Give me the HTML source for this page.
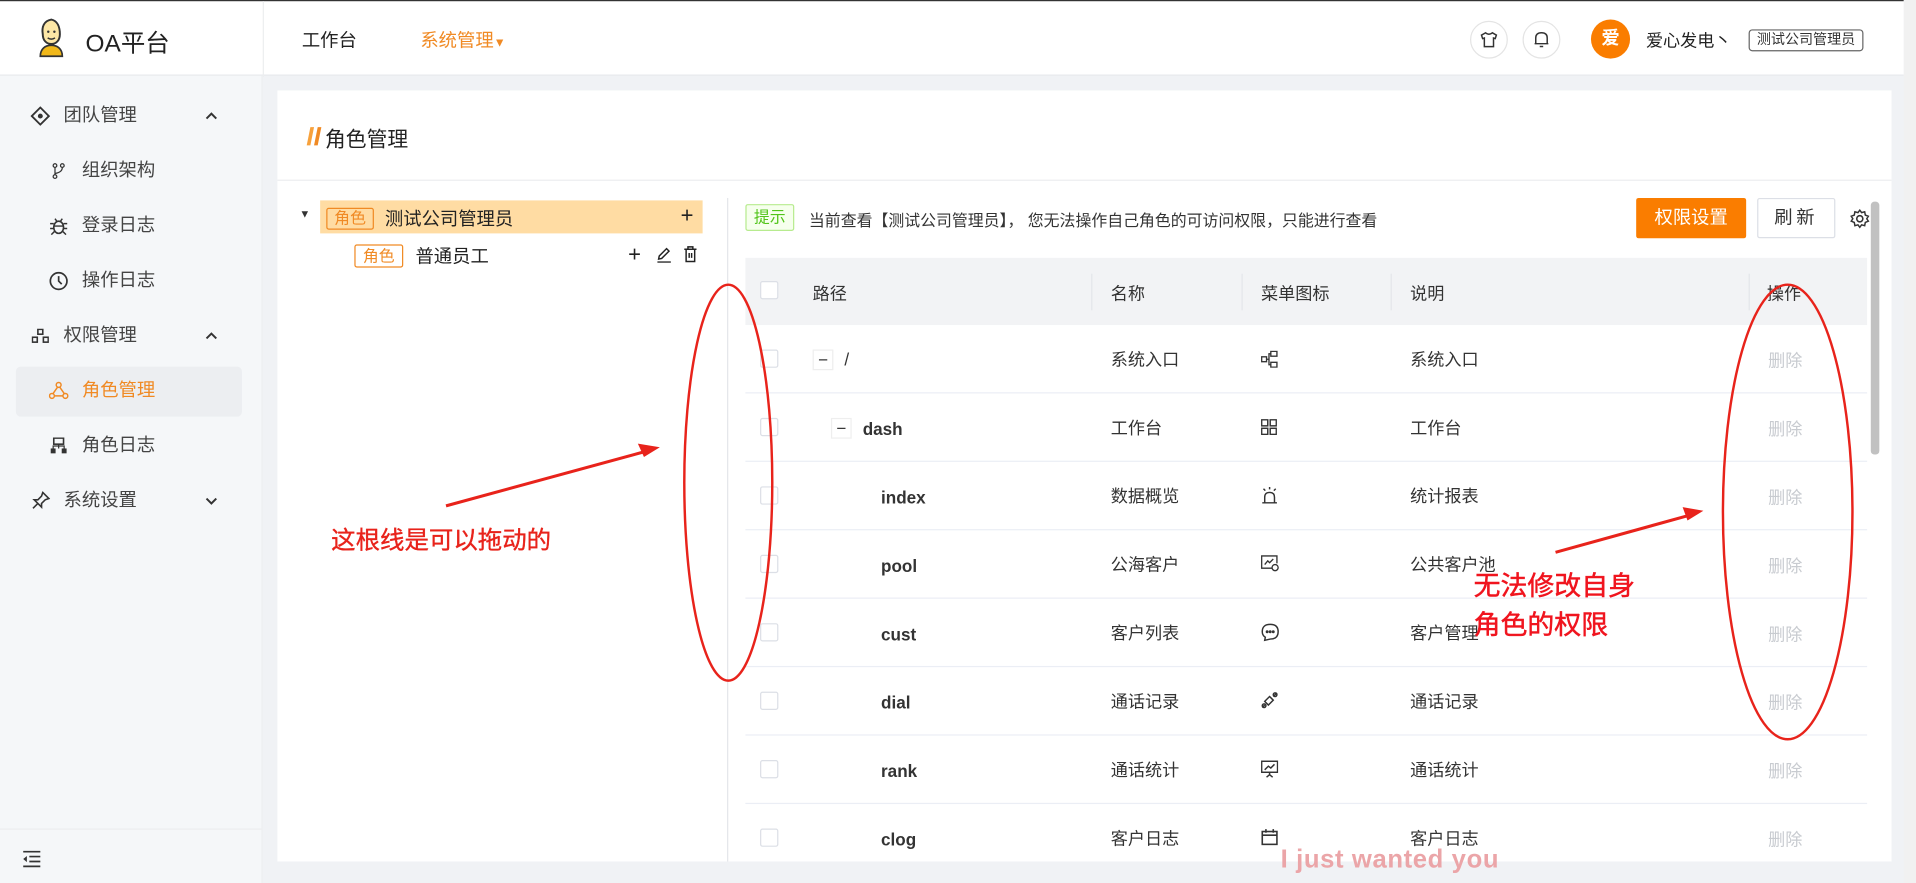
<!DOCTYPE html>
<html><head><meta charset="utf-8"><style>
*{box-sizing:border-box;margin:0;padding:0}
html,body{width:1916px;height:883px;overflow:hidden;background:#f0f2f5}
#w{position:absolute;left:0;top:0;width:1568px;height:723px;transform:scale(1.22194);transform-origin:0 0;font-family:"Liberation Sans","Noto Sans CJK SC",sans-serif;color:#333;background:#f0f2f5}
.a{position:absolute}
.hdr{left:0;top:0;width:1558px;height:62px;background:#fff;border-top:1px solid #333;border-bottom:1px solid #e6e8eb}
.side{left:0;top:62px;width:215px;height:661px;background:#f5f7f9;border-right:1px solid #eceef0}
.mi{position:absolute;font-size:15px;color:#444;line-height:20px}
.t{font-size:14px;color:#333;white-space:nowrap}
.lat{position:relative;top:1px}
.cb{position:absolute;left:622px;width:15px;height:15px;border:1px solid #dcdfe6;border-radius:2px;background:#fff}
.row{position:absolute;left:610px;width:918px;height:56px;border-bottom:1px solid #ebeef5}
.del{position:absolute;left:1447px;font-size:14px;color:#c8cbd0}
</style></head><body><div id="w">
<div class="a hdr">
 <svg class="a" style="left:30px;top:13px" width="24" height="34" viewBox="0 0 24 34"><path d="M12 2 C6 3 4 8 5 14 C5 19 8 22 12 22 C16 22 19 19 19 14 C19 8 17 3 12 2Z" fill="#fde7a6" stroke="#333" stroke-width="1.6"/><circle cx="9.5" cy="12" r="1" fill="#333"/><circle cx="14.5" cy="12" r="1" fill="#333"/><path d="M9 17 Q12 19 15 17" stroke="#333" fill="none" stroke-width="1.2"/><path d="M3 32 C3 26 7 23 12 23 C17 23 21 26 21 32Z" fill="#f1b81a" stroke="#333" stroke-width="1.4"/></svg>
 <div class="a" style="left:70px;top:18px;font-size:20px;color:#222">OA平台</div>
 <div class="a" style="left:215px;top:0;width:1px;height:62px;background:#eceef0"></div>
 <div class="a" style="left:247px;top:21px;font-size:15px;color:#222">工作台</div>
 <div class="a" style="left:344px;top:21px;font-size:15px;color:#f08a24">系统管理<span style="font-size:10px">▼</span></div>
 <div class="a" style="left:1203px;top:16px;width:31px;height:31px;border:1px solid #e4e4e4;border-radius:50%"></div>
 <svg class="a" style="left:1211px;top:24px" width="15" height="15" viewBox="0 0 16 16"><path d="M5 2 L1.5 4 L2.5 7 L4 6.5 V14 H12 V6.5 L13.5 7 L14.5 4 L11 2 Q8 4.5 5 2Z" fill="none" stroke="#333" stroke-width="1.3"/></svg>
 <div class="a" style="left:1246px;top:16px;width:31px;height:31px;border:1px solid #e4e4e4;border-radius:50%"></div>
 <svg class="a" style="left:1254px;top:23px" width="15" height="16" viewBox="0 0 16 16"><path d="M3 12 V7 Q3 2.5 8 2.5 Q13 2.5 13 7 V12 H2 14" fill="none" stroke="#333" stroke-width="1.3"/><path d="M6.5 14.5 H9.5" stroke="#333" stroke-width="1.3"/></svg>
 <div class="a" style="left:1302px;top:15px;width:32px;height:32px;border-radius:50%;background:#fa7d00;color:#fff;font-size:15px;font-weight:bold;text-align:center;line-height:32px">爱</div>
 <div class="a" style="left:1347px;top:22px;font-size:14px;color:#222">爱心发电丶</div>
 <div class="a" style="left:1431px;top:23px;width:94px;height:18px;border:1px solid #666;border-radius:3px;font-size:11.5px;line-height:16px;text-align:center;color:#333">测试公司管理员</div>
</div>
<div class="a" style="left:1558px;top:0;width:10px;height:723px;background:#f1f1f1"></div>
<div class="a side">
 <svg class="a" style="left:25px;top:25px" width="16" height="16" viewBox="0 0 16 16"><path d="M8 1 L15 8 L8 15 L1 8Z" fill="none" stroke="#333" stroke-width="1.5"/><circle cx="8" cy="8" r="2" fill="#333"/></svg>
 <div class="mi" style="left:52px;top:23px">团队管理</div>
 <svg class="a" style="left:168px;top:29px" width="10" height="7" viewBox="0 0 10 7"><path d="M1 6 L5 2 L9 6" fill="none" stroke="#333" stroke-width="1.6"/></svg>
 <svg class="a" style="left:42px;top:71px" width="12" height="14" viewBox="0 0 12 14"><circle cx="3" cy="2.5" r="1.5" fill="none" stroke="#333"/><circle cx="3" cy="11.5" r="1.5" fill="none" stroke="#333"/><circle cx="9" cy="2.5" r="1.5" fill="none" stroke="#333"/><path d="M3 4 V10 M9 4 Q9 8 3 9" fill="none" stroke="#333"/></svg>
 <div class="mi" style="left:67px;top:68px">组织架构</div>
 <svg class="a" style="left:40px;top:115px" width="16" height="16" viewBox="0 0 16 16"><ellipse cx="8" cy="9" rx="4" ry="5" fill="none" stroke="#333" stroke-width="1.3"/><path d="M1 6 H4 M12 6 H15 M1 10 H4 M12 10 H15 M2 15 L4.5 12.5 M14 15 L11.5 12.5 M5 2 L6.5 4 M11 2 L9.5 4 M4 8 H12" stroke="#333" stroke-width="1.2"/></svg>
 <div class="mi" style="left:67px;top:113px">登录日志</div>
 <svg class="a" style="left:40px;top:160px" width="16" height="16" viewBox="0 0 16 16"><circle cx="8" cy="8" r="6.8" fill="none" stroke="#333" stroke-width="1.4"/><path d="M8 4 V8 L10.5 10.5" fill="none" stroke="#333" stroke-width="1.4"/></svg>
 <div class="mi" style="left:67px;top:158px">操作日志</div>
 <svg class="a" style="left:26px;top:207px" width="14" height="12" viewBox="0 0 14 12"><rect x="5" y="0.5" width="4" height="4" fill="none" stroke="#333" stroke-width="1.3"/><rect x="0.5" y="7" width="4" height="4" fill="none" stroke="#333" stroke-width="1.3"/><rect x="9.5" y="7" width="4" height="4" fill="none" stroke="#333" stroke-width="1.3"/></svg>
 <div class="mi" style="left:52px;top:203px">权限管理</div>
 <svg class="a" style="left:168px;top:209px" width="10" height="7" viewBox="0 0 10 7"><path d="M1 6 L5 2 L9 6" fill="none" stroke="#333" stroke-width="1.6"/></svg>
 <div class="a" style="left:13px;top:238px;width:185px;height:41px;background:#eceef1;border-radius:4px"></div>
 <svg class="a" style="left:40px;top:250px" width="16" height="15" viewBox="0 0 16 15"><circle cx="8" cy="3" r="2" fill="none" stroke="#f08a24" stroke-width="1.2"/><circle cx="2.5" cy="12" r="2" fill="none" stroke="#f08a24" stroke-width="1.2"/><circle cx="13.5" cy="12" r="2" fill="none" stroke="#f08a24" stroke-width="1.2"/><path d="M7 5 L3.5 10 M9 5 L12.5 10 M4.5 12 H11.5" stroke="#f08a24" stroke-width="1.2"/></svg>
 <div class="mi" style="left:67px;top:248px;color:#f08a24">角色管理</div>
 <svg class="a" style="left:41px;top:296px" width="14" height="14" viewBox="0 0 14 14"><rect x="3" y="0.5" width="8" height="5" fill="none" stroke="#333" stroke-width="1.3"/><rect x="0.5" y="9" width="4" height="4" fill="#333"/><rect x="9.5" y="9" width="4" height="4" fill="#333"/><path d="M7 5 V9 M2.5 9 V7 H11.5 V9" stroke="#333" fill="none"/></svg>
 <div class="mi" style="left:67px;top:293px">角色日志</div>
 <svg class="a" style="left:26px;top:340px" width="15" height="15" viewBox="0 0 15 15"><path d="M9 1 L14 6 L11 7 L8 10 L8 13 L2 7 L5 7 L8 4Z M5 10 L1 14" fill="none" stroke="#333" stroke-width="1.3"/></svg>
 <div class="mi" style="left:52px;top:338px">系统设置</div>
 <svg class="a" style="left:168px;top:345px" width="10" height="7" viewBox="0 0 10 7"><path d="M1 1 L5 5 L9 1" fill="none" stroke="#333" stroke-width="1.6"/></svg>
 <div class="a" style="left:0;top:616px;width:214px;height:1px;background:#eceef0"></div>
 <svg class="a" style="left:18px;top:634px" width="16" height="14" viewBox="0 0 16 14"><path d="M1 1 H15 M6 5 H15 M6 9 H15 M1 13 H15" stroke="#333" stroke-width="1.4"/><path d="M4 4.5 L1 7 L4 9.5Z" fill="#333"/></svg>
</div>
<div class="a" style="left:227px;top:74px;width:1321px;height:631px;background:#fff"></div>
<svg class="a" style="left:250px;top:103px" width="14" height="17" viewBox="0 0 14 17"><path d="M4 1 L7 1 L4 16 L1 16Z" fill="#f7a13c"/><path d="M10 1 L13 1 L10 16 L7 16Z" fill="#f08a24"/></svg>
<div class="a" style="left:266px;top:100px;font-size:17px;color:#222">角色管理</div>
<div class="a" style="left:227px;top:147px;width:1321px;height:1px;background:#eceef0"></div>
<div class="a" style="left:595px;top:162px;width:1px;height:543px;background:#e4e6ea"></div>
<div class="a" style="left:245px;top:170px;font-size:9px">▼</div>
<div class="a" style="left:262px;top:164px;width:313px;height:27px;background:#ffdca3"></div>
<div class="a" style="left:267px;top:170px;width:39px;height:18px;border:1px solid #f08a24;border-radius:2px;color:#f08a24;font-size:13px;line-height:16px;text-align:center">角色</div>
<div class="a" style="left:315px;top:168px;font-size:15px;color:#222">测试公司管理员</div>
<div class="a" style="left:557px;top:166px;font-size:18px;color:#222">+</div>
<div class="a" style="left:290px;top:200px;width:40px;height:19px;border:1px solid #f08a24;border-radius:2px;color:#f08a24;font-size:13px;line-height:17px;text-align:center">角色</div>
<div class="a" style="left:340px;top:199px;font-size:15px;color:#222">普通员工</div>
<div class="a" style="left:514px;top:198px;font-size:18px;color:#222">+</div>
<svg class="a" style="left:537px;top:202px" width="13" height="13" viewBox="0 0 13 13"><path d="M2 10 L2.5 7.5 L8.5 1.5 L10.5 3.5 L4.5 9.5Z M1 12.5 H12" fill="none" stroke="#222" stroke-width="1.2"/></svg>
<svg class="a" style="left:559px;top:201px" width="12" height="14" viewBox="0 0 12 14"><path d="M1 3 H11 M4 3 V1 H8 V3 M2.5 3 V13 H9.5 V3 M5 6 V10 M7 6 V10" fill="none" stroke="#222" stroke-width="1.2"/></svg>
<div class="a" style="left:610px;top:167px;width:40px;height:22px;border:1px solid #b7eb8f;background:#f6ffed;color:#52c41a;font-size:13px;line-height:20px;text-align:center;border-radius:2px">提示</div>
<div class="a" style="left:662px;top:170px;font-size:13px;color:#333">当前查看【测试公司管理员】， 您无法操作自己角色的可访问权限，只能进行查看</div>
<div class="a" style="left:1339px;top:162px;width:90px;height:33px;background:#fa7d00;color:#fff;font-size:15px;line-height:33px;text-align:center;border-radius:2px">权限设置</div>
<div class="a" style="left:1438px;top:162px;width:64px;height:33px;border:1px solid #dcdfe6;font-size:15px;line-height:31px;text-align:center;border-radius:2px;letter-spacing:3px">刷新</div>
<svg class="a" style="left:1514px;top:171px" width="16" height="16" viewBox="0 0 16 16"><circle cx="8" cy="8" r="2.5" fill="none" stroke="#333" stroke-width="1.3"/><path d="M8 1 L9.5 3 L12 2.3 L12.5 5 L15 6 L13.7 8 L15 10 L12.5 11 L12 13.7 L9.5 13 L8 15 L6.5 13 L4 13.7 L3.5 11 L1 10 L2.3 8 L1 6 L3.5 5 L4 2.3 L6.5 3Z" fill="none" stroke="#333" stroke-width="1.2"/></svg>
<div class="a" style="left:1531px;top:165px;width:7px;height:207px;background:#c1c1c1;border-radius:3px"></div>
<div class="a" style="left:610px;top:211px;width:918px;height:55px;background:#f2f3f5"></div>
<div class="cb" style="top:230px"></div>
<div class="a t" style="left:665px;top:230px">路径</div>
<div class="a" style="left:893px;top:224px;width:1px;height:30px;background:#e4e6ea"></div>
<div class="a t" style="left:909px;top:230px">名称</div>
<div class="a" style="left:1016px;top:224px;width:1px;height:30px;background:#e4e6ea"></div>
<div class="a t" style="left:1032px;top:230px">菜单图标</div>
<div class="a" style="left:1138px;top:224px;width:1px;height:30px;background:#e4e6ea"></div>
<div class="a t" style="left:1154px;top:230px">说明</div>
<div class="a" style="left:1431px;top:224px;width:1px;height:30px;background:#e4e6ea"></div>
<div class="a t" style="left:1446px;top:230px">操作</div>

<div class="row" style="top:266px"></div><div class="row" style="top:322px"></div><div class="row" style="top:378px"></div><div class="row" style="top:434px"></div><div class="row" style="top:490px"></div><div class="row" style="top:546px"></div><div class="row" style="top:602px"></div><div class="row" style="top:658px;border:none;height:47px"></div>

<div class="cb" style="top:286px"></div><div class="cb" style="top:342px"></div><div class="cb" style="top:398px"></div><div class="cb" style="top:454px"></div><div class="cb" style="top:510px"></div><div class="cb" style="top:566px"></div><div class="cb" style="top:622px"></div><div class="cb" style="top:678px"></div>

<div class="a" style="left:665px;top:286px;width:17px;height:17px;border:1px solid #eee;text-align:center;line-height:15px;font-size:14px">−</div>
<div class="a t" style="left:691px;top:286px">/</div>
<div class="a" style="left:680px;top:342px;width:17px;height:17px;border:1px solid #eee;text-align:center;line-height:15px;font-size:14px">−</div>
<div class="a t" style="left:706px;top:343px;font-weight:bold">dash</div>
<div class="a t" style="left:721px;top:399px;font-weight:bold">index</div>
<div class="a t" style="left:721px;top:455px;font-weight:bold">pool</div>
<div class="a t" style="left:721px;top:511px;font-weight:bold">cust</div>
<div class="a t" style="left:721px;top:567px;font-weight:bold">dial</div>
<div class="a t" style="left:721px;top:623px;font-weight:bold">rank</div>
<div class="a t" style="left:721px;top:679px;font-weight:bold">clog</div>

<div class="a t" style="left:909px;top:284px">系统入口</div><div class="a t" style="left:1154px;top:284px">系统入口</div>
<div class="a t" style="left:909px;top:340px">工作台</div><div class="a t" style="left:1154px;top:340px">工作台</div>
<div class="a t" style="left:909px;top:396px">数据概览</div><div class="a t" style="left:1154px;top:396px">统计报表</div>
<div class="a t" style="left:909px;top:452px">公海客户</div><div class="a t" style="left:1154px;top:452px">公共客户池</div>
<div class="a t" style="left:909px;top:508px">客户列表</div><div class="a t" style="left:1154px;top:508px">客户管理</div>
<div class="a t" style="left:909px;top:564px">通话记录</div><div class="a t" style="left:1154px;top:564px">通话记录</div>
<div class="a t" style="left:909px;top:620px">通话统计</div><div class="a t" style="left:1154px;top:620px">通话统计</div>
<div class="a t" style="left:909px;top:676px">客户日志</div><div class="a t" style="left:1154px;top:676px">客户日志</div>

<svg class="a" style="left:1032px;top:287px" width="14" height="14" viewBox="0 0 14 14" fill="none" stroke="#333" stroke-width="1.1"><rect x="0.5" y="5" width="4" height="4"/><rect x="8" y="0.5" width="5" height="4"/><rect x="8" y="9.5" width="5" height="4"/><path d="M4.5 7 H6.5 V2.5 H8 M6.5 7 V11.5 H8"/></svg>
<svg class="a" style="left:1032px;top:343px" width="13" height="13" viewBox="0 0 13 13" fill="none" stroke="#333" stroke-width="1.2"><rect x="0.5" y="0.5" width="5" height="5"/><rect x="7.5" y="0.5" width="5" height="5"/><rect x="0.5" y="7.5" width="5" height="5"/><rect x="7.5" y="7.5" width="5" height="5"/></svg>
<svg class="a" style="left:1032px;top:398px" width="14" height="15" viewBox="0 0 14 15" fill="none" stroke="#333" stroke-width="1.2"><path d="M3 13 V9 Q3 5 7 5 Q11 5 11 9 V13 M1 13.5 H13 M7 0.5 V2.5 M2 2 L3.5 3.5 M12 2 L10.5 3.5"/></svg>
<svg class="a" style="left:1032px;top:454px" width="15" height="14" viewBox="0 0 15 14" fill="none" stroke="#333" stroke-width="1.1"><path d="M9 11 H0.5 V1 H13 V7"/><path d="M3 8 L5.5 5 L7 6.5 L10 3.5"/><circle cx="11.5" cy="10.5" r="2.5"/></svg>
<svg class="a" style="left:1032px;top:510px" width="15" height="15" viewBox="0 0 15 15" fill="none" stroke="#333" stroke-width="1.2"><path d="M7.5 1 Q14 1 14 7 Q14 13 7.5 13 L3 14 L3.5 11.5 Q1 10 1 7 Q1 1 7.5 1Z"/><circle cx="5" cy="7" r="0.6" fill="#333"/><circle cx="7.5" cy="7" r="0.6" fill="#333"/><circle cx="10" cy="7" r="0.6" fill="#333"/></svg>
<svg class="a" style="left:1032px;top:566px" width="14" height="14" viewBox="0 0 14 14" fill="none" stroke="#333" stroke-width="1.2"><path d="M3 8 L7 4 L10 7 L6 11Z M1 13 L3 11 M13 1 L10 4"/><circle cx="11.5" cy="2.5" r="1.5"/><circle cx="2.5" cy="11.5" r="1.5"/></svg>
<svg class="a" style="left:1032px;top:622px" width="14" height="15" viewBox="0 0 14 15" fill="none" stroke="#333" stroke-width="1.2"><rect x="0.5" y="1" width="13" height="9"/><path d="M3 8 L6 5 L8 6.5 L11 3.5 M7 10 V12 M4.5 14 L7 12 L9.5 14"/></svg>
<svg class="a" style="left:1032px;top:678px" width="14" height="14" viewBox="0 0 14 14" fill="none" stroke="#333" stroke-width="1.3"><rect x="1" y="2.5" width="12" height="10.5"/><path d="M1 5.5 H13 M4 0.5 V3.5 M10 0.5 V3.5"/></svg>

<div class="del" style="top:285px">删除</div><div class="del" style="top:341px">删除</div><div class="del" style="top:397px">删除</div><div class="del" style="top:453px">删除</div><div class="del" style="top:509px">删除</div><div class="del" style="top:565px">删除</div><div class="del" style="top:621px">删除</div><div class="del" style="top:677px">删除</div>

<svg class="a" style="left:0;top:0" width="1568" height="723" viewBox="0 0 1568 723">
<ellipse cx="596" cy="395" rx="36" ry="162" fill="none" stroke="#e8231b" stroke-width="2"/>
<ellipse cx="1463" cy="419" rx="53" ry="186" fill="none" stroke="#e8231b" stroke-width="2"/>
<path d="M365 414 L530 369" stroke="#e8231b" stroke-width="2.5"/><path d="M540 366 L522 363 L527 374Z" fill="#e8231b"/>
<path d="M1273 452 L1385 421" stroke="#e8231b" stroke-width="2.5"/><path d="M1394 418 L1377 415 L1381 426Z" fill="#e8231b"/>
</svg>
<div class="a" style="left:271px;top:426px;font-size:20px;color:#e8231b;-webkit-text-stroke:0.3px #e8231b">这根线是可以拖动的</div>
<div class="a" style="left:1206px;top:464px;font-size:22px;color:#f0141e;line-height:32px;-webkit-text-stroke:0.4px #f0141e">无法修改自身<br>角色的权限</div>
<div class="a" style="left:1048px;top:692px;font-size:21px;color:#eba5a8;font-weight:600;letter-spacing:0.5px">I just wanted you</div>
</div></body></html>
